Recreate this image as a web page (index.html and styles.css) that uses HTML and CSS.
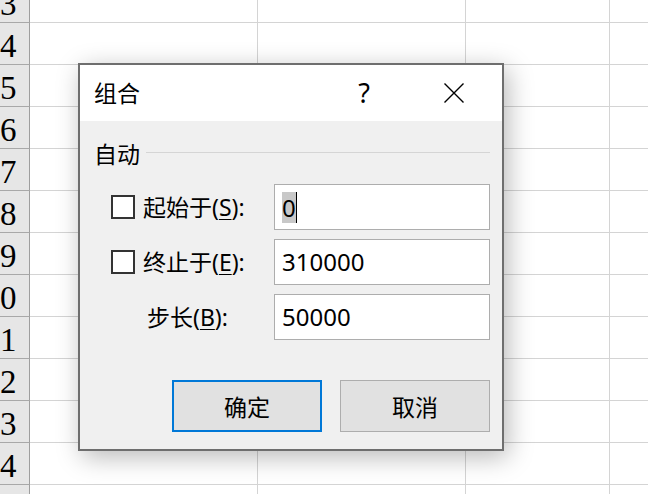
FILE: index.html
```html
<!DOCTYPE html>
<html lang="zh-CN">
<head>
<meta charset="utf-8">
<title>组合</title>
<link rel="stylesheet" href="styles.css">
</head>
<body>
<div class="sheet">
  <div class="row"><div class="rh">3</div><div class="c cb"></div><div class="c cc"></div><div class="c cd"></div><div class="c ce"></div></div>
  <div class="row"><div class="rh">4</div><div class="c cb"></div><div class="c cc"></div><div class="c cd"></div><div class="c ce"></div></div>
  <div class="row"><div class="rh">5</div><div class="c cb"></div><div class="c cc"></div><div class="c cd"></div><div class="c ce"></div></div>
  <div class="row"><div class="rh">6</div><div class="c cb"></div><div class="c cc"></div><div class="c cd"></div><div class="c ce"></div></div>
  <div class="row"><div class="rh">7</div><div class="c cb"></div><div class="c cc"></div><div class="c cd"></div><div class="c ce"></div></div>
  <div class="row"><div class="rh">8</div><div class="c cb"></div><div class="c cc"></div><div class="c cd"></div><div class="c ce"></div></div>
  <div class="row"><div class="rh">9</div><div class="c cb"></div><div class="c cc"></div><div class="c cd"></div><div class="c ce"></div></div>
  <div class="row"><div class="rh">0</div><div class="c cb"></div><div class="c cc"></div><div class="c cd"></div><div class="c ce"></div></div>
  <div class="row"><div class="rh">1</div><div class="c cb"></div><div class="c cc"></div><div class="c cd"></div><div class="c ce"></div></div>
  <div class="row"><div class="rh">2</div><div class="c cb"></div><div class="c cc"></div><div class="c cd"></div><div class="c ce"></div></div>
  <div class="row"><div class="rh">3</div><div class="c cb"></div><div class="c cc"></div><div class="c cd"></div><div class="c ce"></div></div>
  <div class="row"><div class="rh">4</div><div class="c cb"></div><div class="c cc"></div><div class="c cd"></div><div class="c ce"></div></div>
  <div class="row"><div class="rh"></div><div class="c cb"></div><div class="c cc"></div><div class="c cd"></div><div class="c ce"></div></div>
</div>

<div class="dialog">
  <div class="titlebar">
    <span class="title">组合</span>
    <span class="help">?</span>
    <span class="close">
      <svg width="20" height="20" viewBox="0 0 20 20"><path d="M0.5 0.5 L19.5 19.5 M19.5 0.5 L0.5 19.5" stroke="#000" stroke-width="1.4" fill="none"/></svg>
    </span>
  </div>
  <div class="body">
    <div class="group"><span class="group-label">自动</span><div class="rule"></div></div>
    <div class="form">
      <span class="chk"></span>
      <span class="lbl">起始于(<u>S</u>):</span>
      <div class="input"><span class="sel">0</span></div>

      <span class="chk"></span>
      <span class="lbl">终止于(<u>E</u>):</span>
      <div class="input">310000</div>

      <span class="nochk"></span>
      <span class="lbl lbl-step">步长(<u>B</u>):</span>
      <div class="input">50000</div>
    </div>
    <div class="buttons">
      <button class="btn btn-primary">确定</button>
      <button class="btn">取消</button>
    </div>
  </div>
</div>
</body>
</html>
```

FILE: styles.css
```css
* { box-sizing: border-box; }

html, body {
  margin: 0;
  padding: 0;
  width: 648px;
  height: 494px;
  overflow: hidden;
  background: #fff;
}

body {
  position: relative;
  font-family: "Noto Sans", "Noto Sans CJK SC", sans-serif;
  color: #000;
}

/* spreadsheet */
.sheet {
  margin-top: -19px;
}

.row {
  display: flex;
  height: 42px;
}

.rh {
  width: 30px;
  flex: none;
  background: #e6e6e6;
  border-right: 1px solid #9e9e9e;
  border-bottom: 1px solid #a8a8a8;
  font-family: "Liberation Serif", serif;
  font-size: 33px;
  line-height: 42px;
  padding-top: 2px;
  padding-left: 0;
  overflow: hidden;
}

.c {
  flex: none;
  border-right: 1px solid #d4d4d4;
  border-bottom: 1px solid #d4d4d4;
}
.cb { width: 228px; }
.cc { width: 208px; }
.cd { width: 144px; }
.ce { flex: 1; border-right: none; }

/* dialog window */
.dialog {
  position: absolute;
  left: 78px;
  top: 63px;
  width: 426px;
  height: 388px;
  border: 2px solid #6e6e6e;
  background: #f0f0f0;
  box-shadow: 4px 6px 24px rgba(0, 0, 0, 0.28);
  display: flex;
  flex-direction: column;
}

.titlebar {
  height: 56px;
  flex: none;
  background: #fff;
  display: flex;
  align-items: center;
  padding-left: 14px;
  padding-right: 28px;
}

.title {
  flex: 1;
  font-size: 23px;
  line-height: 30px;
}

.help {
  width: 40px;
  text-align: center;
  font-size: 27px;
  line-height: 30px;
  margin-right: 50px;
}

.close {
  width: 40px;
  height: 20px;
  display: flex;
  justify-content: center;
}

.body {
  flex: 1;
  display: flex;
  flex-direction: column;
  padding: 20px 12px 0 14px;
}

.group {
  display: flex;
  height: 26px;
}

.group-label {
  font-size: 23px;
  line-height: 26px;
}

.rule {
  flex: 1;
  height: 1px;
  margin-top: 11px;
  margin-left: 6px;
  background: #d5d5d5;
}

.form {
  margin-top: 17px;
  padding-left: 17px;
  display: grid;
  grid-template-columns: 24px 139px 216px;
  grid-auto-rows: 46px;
  row-gap: 9px;
  align-items: center;
}

.chk {
  width: 24px;
  height: 24px;
  border: 2px solid #333;
  background: #fff;
}

.lbl {
  padding-left: 8px;
  font-size: 23px;
  line-height: 30px;
  white-space: nowrap;
}

.lbl u {
  text-underline-offset: 3px;
  text-decoration-thickness: 1px;
}

.lbl-step {
  padding-left: 12px;
}

.input {
  height: 46px;
  border: 1px solid #adadad;
  background: #fff;
  padding-left: 7px;
  font-size: 24px;
  line-height: 44px;
  display: flex;
  align-items: center;
}

.sel {
  background: #c8c8c8;
  line-height: 31px;
  height: 31px;
  border-right: 1px solid #000;
}

.buttons {
  margin-top: 40px;
  display: flex;
  justify-content: flex-end;
  gap: 18px;
}

.btn {
  width: 150px;
  height: 52px;
  background: #e1e1e1;
  border: 1px solid #adadad;
  font-family: "Noto Sans", "Noto Sans CJK SC", sans-serif;
  font-size: 23px;
  color: #000;
  padding: 0;
}

.btn-primary {
  border: 2px solid #0078d7;
}
```
